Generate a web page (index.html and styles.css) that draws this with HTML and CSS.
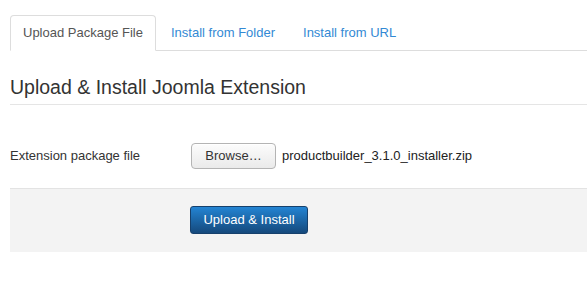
FILE: index.html
```html
<!DOCTYPE html>
<html>
<head>
<meta charset="utf-8">
<link rel="stylesheet" href="styles.css">
</head>
<body>
<div class="page">
  <ul class="tabs">
    <li class="tab active"><a>Upload Package File</a></li>
    <li class="tab"><a>Install from Folder</a></li>
    <li class="tab"><a>Install from URL</a></li>
  </ul>
  <div class="legend">Upload &amp; Install Joomla Extension</div>
  <div class="row">
    <div class="label">Extension package file</div>
    <div class="control">
      <span class="browse">Browse…</span>
      <span class="filename">productbuilder_3.1.0_installer.zip</span>
    </div>
  </div>
  <div class="actions">
    <button class="primary" type="button">Upload &amp; Install</button>
  </div>
</div>
</body>
</html>
```

FILE: styles.css
```css
html, body {
  margin: 0;
  padding: 0;
  background: #fff;
}
body {
  font-family: "Liberation Sans", Arial, sans-serif;
  font-size: 13px;
  line-height: 18px;
  color: #333;
}
.page {
  padding: 15px 0 0 10px;
}
.tabs {
  list-style: none;
  margin: 0;
  padding: 0;
  display: flex;
  border-bottom: 1px solid #ddd;
}
.tab {
  margin-right: 2px;
  margin-bottom: -1px;
}
.tab a {
  display: block;
  padding: 8px 12px;
  line-height: 18px;
  border: 1px solid transparent;
  border-radius: 4px 4px 0 0;
  color: #3389d4;
}
.tab.active a {
  color: #555;
  background: #fff;
  border-color: #ddd #ddd transparent;
}
.legend {
  margin-top: 19px;
  font-size: 19.5px;
  line-height: 34px;
  color: #333;
  border-bottom: 1px solid #e5e5e5;
}
.row {
  display: flex;
  align-items: center;
  padding: 38px 0 19px;
}
.label {
  width: 180px;
}
.control {
  display: flex;
  align-items: center;
}
.browse {
  display: inline-block;
  box-sizing: border-box;
  width: 85px;
  height: 26px;
  line-height: 24px;
  margin-left: 1px;
  text-align: center;
  border: 1px solid #b4b4b4;
  border-radius: 4px;
  background: linear-gradient(#fcfcfc, #eaeaea);
  color: #333;
  box-shadow: inset 0 1px 0 #fff;
}
.filename {
  margin-left: 6px;
  color: #222;
}
.actions {
  background: #f3f3f3;
  border-top: 1px solid #e3e3e3;
  padding: 17px 0 18px 180px;
}
.primary {
  font-family: "Liberation Sans", Arial, sans-serif;
  font-size: 13px;
  line-height: 18px;
  color: #fff;
  padding: 4px 12px;
  width: 118px;
  border: 1px solid #16406c;
  border-radius: 3px;
  background: linear-gradient(#2384d3, #15497c);
  cursor: pointer;
}
```
